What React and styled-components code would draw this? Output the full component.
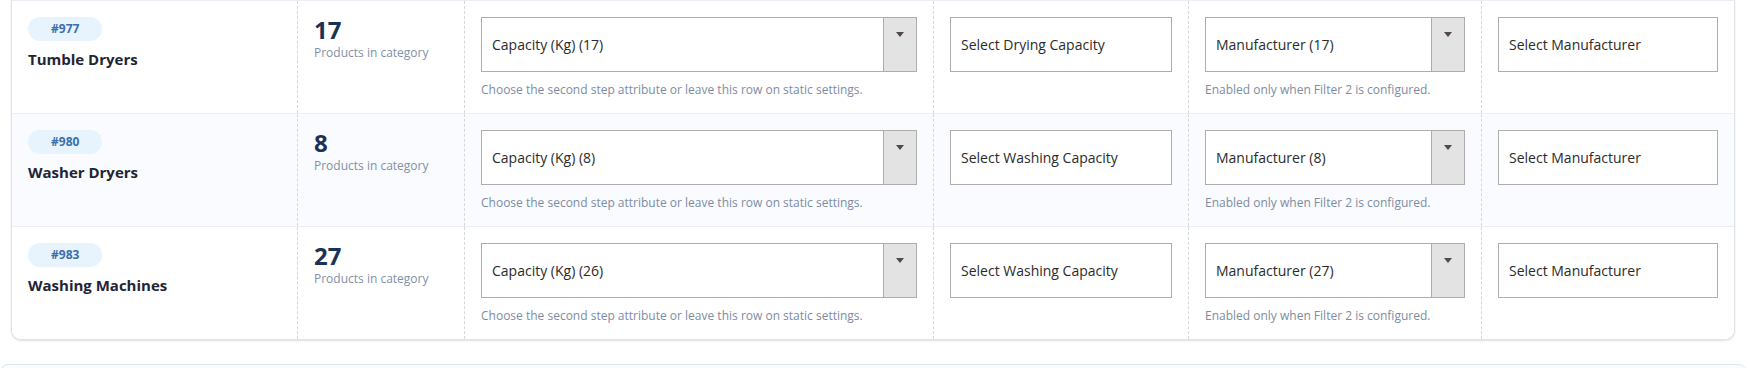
import React from 'react';
import styled, { createGlobalStyle } from 'styled-components';

const GlobalStyle = createGlobalStyle`
    html, body {
        margin: 0;
        padding: 0;
        background: #ffffff;
        overflow: hidden;
    }
    body {
        font-family: 'Open Sans', 'Noto Sans', sans-serif;
    }
`

const Page = styled.div`
    width: 1748px;
`

const Card = styled.div`
    margin: 0 13px 0 11px;
    background: #ffffff;
    border: 1px solid #dfe4ea;
    border-top: none;
    border-radius: 0 0 10px 10px;
    box-shadow: 0 1px 2px rgba(20, 30, 50, 0.14);
    overflow: hidden;
`

const Row = styled.div`
    display: grid;
    grid-template-columns: 285px 167px 469px 255px 293px 1fr;
    border-top: 1px solid #ebeff5;
    background: ${p => (p.$alt ? '#f9fbfe' : '#ffffff')};
`

const Cell = styled.div`
    padding: 16px 16px 14px 16px;
    border-left: ${p => (p.$first ? 'none' : '1px dashed #d3d8df')};
    display: flex;
    flex-direction: column;
    align-items: flex-start;
`

const Badge = styled.span`
    display: inline-block;
    height: 24px;
    line-height: 24px;
    padding: 0 23px;
    border-radius: 12px;
    background: #e7f4fe;
    color: #3d6fa9;
    font-size: 12px;
    font-weight: 700;
`

const Name = styled.div`
    margin-top: 8px;
    font-size: 15px;
    line-height: 20px;
    font-weight: 700;
    color: #1f2535;
`

const Count = styled.div`
    font-size: 24px;
    line-height: 26px;
    font-weight: 700;
    color: #1b3156;
`

const CountLabel = styled.div`
    margin-top: 2px;
    font-size: 12px;
    line-height: 16px;
    color: #8290a6;
`

const Select = styled.div`
    width: 100%;
    height: 55px;
    box-sizing: border-box;
    display: flex;
    border: 1px solid #adadad;
    background: #ffffff;
`

const SelectText = styled.span`
    flex: 1;
    display: flex;
    align-items: center;
    padding-left: 10px;
    font-size: 14px;
    color: #2b2b2b;
`

const ArrowBox = styled.span`
    width: 33px;
    border-left: 1px solid #adadad;
    background: #e3e3e3;
    display: flex;
    justify-content: center;
    padding-top: 14px;
    box-sizing: border-box;

    &::after {
        content: '';
        width: 0;
        height: 0;
        border-left: 4px solid transparent;
        border-right: 4px solid transparent;
        border-top: 5px solid #514943;
    }
`

const Help = styled.div`
    margin-top: 9px;
    font-size: 12px;
    line-height: 18px;
    color: #7d8ca3;
`

const Footer = styled.div`
    margin-top: 24px;
    width: 1747px;
    height: 40px;
    box-sizing: border-box;
    border: 1px solid #dce7f3;
    border-radius: 8px;
    background: #fafcfe;
`

const rows = [
    { id: 977, name: 'Tumble Dryers', count: 17, cap: 17, second: 'Select Drying Capacity', man: 17 },
    { id: 980, name: 'Washer Dryers', count: 8, cap: 8, second: 'Select Washing Capacity', man: 8 },
    { id: 983, name: 'Washing Machines', count: 27, cap: 26, second: 'Select Washing Capacity', man: 27 },
];

const Dropdown = ({ label }) => (
    <Select>
        <SelectText>{label}</SelectText>
        <ArrowBox />
    </Select>
);

const Field = ({ label }) => (
    <Select>
        <SelectText>{label}</SelectText>
    </Select>
);

const App = () => {
    return (
        <Page>
            <GlobalStyle />
            <Card>
                {rows.map((r, i) => (
                    <Row key={r.id} $alt={i === 1}>
                        <Cell $first>
                            <Badge>#{r.id}</Badge>
                            <Name>{r.name}</Name>
                        </Cell>
                        <Cell>
                            <Count>{r.count}</Count>
                            <CountLabel>Products in category</CountLabel>
                        </Cell>
                        <Cell>
                            <Dropdown label={`Capacity (Kg) (${r.cap})`} />
                            <Help>Choose the second step attribute or leave this row on static settings.</Help>
                        </Cell>
                        <Cell>
                            <Field label={r.second} />
                        </Cell>
                        <Cell>
                            <Dropdown label={`Manufacturer (${r.man})`} />
                            <Help>Enabled only when Filter 2 is configured.</Help>
                        </Cell>
                        <Cell>
                            <Field label="Select Manufacturer" />
                        </Cell>
                    </Row>
                ))}
            </Card>
            <Footer />
        </Page>
    );
}

export default App;
